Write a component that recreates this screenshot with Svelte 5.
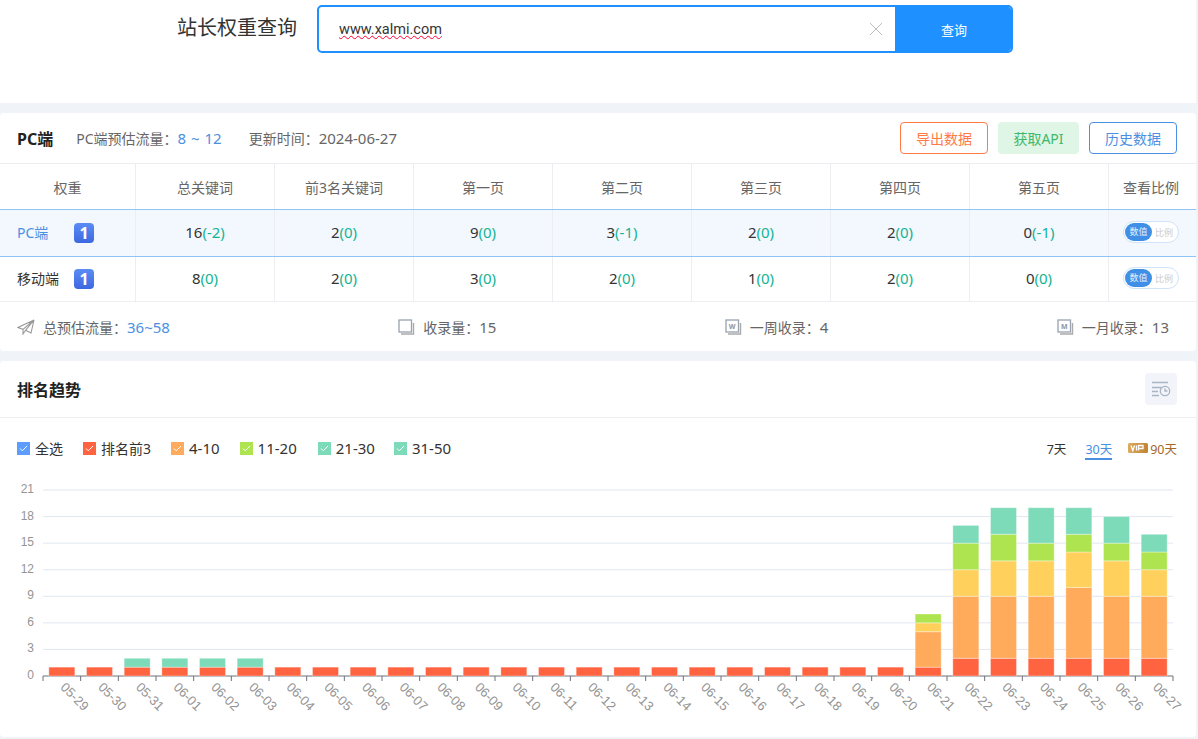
<script>
  const columns = ['权重', '总关键词', '前3名关键词', '第一页', '第二页', '第三页', '第四页', '第五页', '查看比例'];
  const rows = [
    { name: 'PC端', active: true, cells: [['16', '(-2)'], ['2', '(0)'], ['9', '(0)'], ['3', '(-1)'], ['2', '(0)'], ['2', '(0)'], ['0', '(-1)']] },
    { name: '移动端', active: false, cells: [['8', '(0)'], ['2', '(0)'], ['3', '(0)'], ['2', '(0)'], ['1', '(0)'], ['2', '(0)'], ['0', '(0)']] }
  ];
  const legend = [
    { label: '全选', color: '#5c9dff', gap: 20 },
    { label: '排名前3', color: '#ff6340', gap: 20 },
    { label: '4-10', color: '#ffab5b', gap: 20, num: true },
    { label: '11-20', color: '#aee44f', gap: 21, num: true },
    { label: '21-30', color: '#7ddbb9', gap: 19, num: true },
    { label: '31-50', color: '#7ddbb9', gap: 0, num: true }
  ];

  const colors = ['#ff6340', '#ffab5b', '#ffd15c', '#aee44f', '#7ddbb9'];
  const dates = ['05-29', '05-30', '05-31'];
  for (let d = 1; d <= 27; d++) dates.push('06-' + String(d).padStart(2, '0'));

  const special = {
    '05-31': [1, 0, 0, 0, 1],
    '06-01': [1, 0, 0, 0, 1],
    '06-02': [1, 0, 0, 0, 1],
    '06-03': [1, 0, 0, 0, 1],
    '06-21': [1, 4, 1, 1, 0],
    '06-22': [2, 7, 3, 3, 2],
    '06-23': [2, 7, 4, 3, 3],
    '06-24': [2, 7, 4, 2, 4],
    '06-25': [2, 8, 4, 2, 3],
    '06-26': [2, 7, 4, 2, 3],
    '06-27': [2, 7, 3, 2, 2]
  };

  const left = 43;
  const right = 1173;
  const top = 13;
  const base = 199;
  const step = (right - left) / dates.length;
  const unit = (base - top) / 21;
  const ticks = [0, 3, 6, 9, 12, 15, 18, 21];

  const bars = dates.map((date, i) => {
    const values = special[date] || [1, 0, 0, 0, 0];
    let sum = 0;
    const parts = [];
    values.forEach((v, s) => {
      if (v > 0) {
        parts.push({ y: base - (sum + v) * unit, h: v * unit, color: colors[s] });
        sum += v;
      }
    });
    return { date, x: left + step * i + (step - 26) / 2, center: left + step * (i + 0.5), parts };
  });
</script>

<div class="page">
  <section class="search">
    <h1>站长权重查询</h1>
    <div class="search-box">
      <div class="input">
        <span class="url">www.xalmi.com</span>
        <svg class="clear" width="14" height="14" viewBox="0 0 14 14"><path d="M1 1l12 12M13 1L1 13" stroke="#bdbdbd" stroke-width="1" fill="none" /></svg>
      </div>
      <button class="go">查询</button>
    </div>
  </section>

  <section class="card pc">
    <div class="pc-head">
      <strong>PC端</strong>
      <span class="meta first">PC端预估流量：<em class="num wide">8 ~ 12</em></span>
      <span class="meta">更新时间：<span class="num">2024-06-27</span></span>
      <div class="actions">
        <button class="btn orange">导出数据</button>
        <button class="btn green">获取API</button>
        <button class="btn blue">历史数据</button>
      </div>
    </div>

    <div class="table">
      <div class="tr th">
        {#each columns as c}
          <div class="td">{c}</div>
        {/each}
      </div>
      {#each rows as r}
        <div class="tr" class:active={r.active}>
          <div class="td name">
            <span class="rname">{r.name}</span>
            <span class="badge">1</span>
          </div>
          {#each r.cells as cell}
            <div class="td val">{cell[0]}<span class="diff">{cell[1]}</span></div>
          {/each}
          <div class="td val">
            <div class="toggle"><span class="on">数值</span><span class="off">比例</span></div>
          </div>
        </div>
      {/each}
    </div>

    <div class="stats">
      <div class="stat">
        <svg width="18" height="16" viewBox="0 0 18 16" fill="none" stroke="#999" stroke-width="1.1"><path d="M17 1L1 8.5l5 1.8L17 1zM17 1l-3 13-5.500-2.700L17 1zM6 10.300V15l2.500-3.700" /></svg>
        <span>总预估流量：<em class="num">36~58</em></span>
      </div>
      <div class="stat">
        <svg width="17" height="16" viewBox="0 0 17 16" fill="none"><path d="M3 15h12.500V4" stroke="#aaa" stroke-width="1.400" /><rect x="1" y="1" width="12.500" height="12" stroke="#98a2b0" stroke-width="1.300" /></svg>
        <span>收录量：<span class="num">15</span></span>
      </div>
      <div class="stat">
        <svg width="17" height="16" viewBox="0 0 17 16" fill="none"><path d="M3 15h12.500V4" stroke="#aaa" stroke-width="1.400" /><rect x="1" y="1" width="12.500" height="12" stroke="#98a2b0" stroke-width="1.300" /><text x="7.200" y="9.500" font-size="7" font-weight="700" text-anchor="middle" fill="#8b95a3" stroke="none">W</text></svg>
        <span>一周收录：<span class="num">4</span></span>
      </div>
      <div class="stat">
        <svg width="17" height="16" viewBox="0 0 17 16" fill="none"><path d="M3 15h12.500V4" stroke="#aaa" stroke-width="1.400" /><rect x="1" y="1" width="12.500" height="12" stroke="#98a2b0" stroke-width="1.300" /><text x="7.200" y="9.500" font-size="7" font-weight="700" text-anchor="middle" fill="#8b95a3" stroke="none">M</text></svg>
        <span>一月收录：<span class="num">13</span></span>
      </div>
    </div>
  </section>

  <section class="card trend">
    <div class="trend-head">
      <h2>排名趋势</h2>
      <button class="history" aria-label="历史">
        <svg width="20" height="16" viewBox="0 0 20 16" fill="none" stroke="#a9b4c4" stroke-width="1.300"><path d="M1 1.500h16M1 6.500h9M1 10.500h6M1 14.500h7" /><circle cx="14" cy="10" r="4.700" /><path d="M14 7.500V10h2.400" /></svg>
      </button>
    </div>

    <div class="filters">
      <div class="legend">
        {#each legend as l}
          <div class="leg" style:margin-right="{l.gap}px">
            <span class="check" style:background={l.color}>
              <svg width="9" height="7" viewBox="0 0 9 7" fill="none"><path d="M1 3.500l2.300 2.300L8 1" stroke="#fff" stroke-width="1" /></svg>
            </span>
            <span class:num={l.num}>{l.label}</span>
          </div>
        {/each}
      </div>
      <div class="ranges">
        <span class="seven">7天</span>
        <span class="cur">30天</span>
        <span class="vip">
          <svg width="20" height="10" viewBox="0 0 20 10"><defs><linearGradient id="vipg" x1="0" y1="0" x2="1" y2="0"><stop offset="0" stop-color="#dcaa5f" /><stop offset="1" stop-color="#bf8434" /></linearGradient></defs><rect width="20" height="10" rx="1.500" fill="url(#vipg)" /><path d="M3 2.500l1.800 5 1.800-5M8.500 2.500v5M10.500 7.500v-5h4.500v3h-4.500" stroke="#fff" stroke-width="1.300" fill="none" /></svg>
          90天
        </span>
      </div>
    </div>

    <svg class="chart" width="1196" height="250" viewBox="0 0 1196 250">
      {#each ticks as t}
        <line x1={left} x2={right} y1={base - t * unit} y2={base - t * unit} stroke={t === 0 ? '#6e7079' : '#e0e6f1'} stroke-width="1" />
        <text x="34" y={base - t * unit + 3} text-anchor="end" class="tick">{t}</text>
      {/each}
      {#each bars as b, i}
        {#each b.parts as p}
          <rect x={b.x} y={p.y} width="26" height={p.h} fill={p.color} stroke="#fff" stroke-opacity="0.35" stroke-width="1" />
        {/each}
        <line x1={left + step * i} x2={left + step * i} y1={base} y2={base + 5} stroke="#6e7079" />
        <text class="tick date" x={b.center - 2} y={base + 12} transform="rotate(45 {b.center - 2} {base + 12})">{b.date}</text>
      {/each}
      <line x1={right} x2={right} y1={base} y2={base + 5} stroke="#6e7079" />
    </svg>
  </section>
</div>

<style>
  :global(body) {
    background: #f0f4f8;
    font-family: "Noto Sans", "Noto Sans CJK SC", sans-serif;
    color: #333;
  }
  .page {
    width: 1196px;
    display: flex;
    flex-direction: column;
    gap: 10px;
    font-size: 14px;
  }
  em {
    font-style: normal;
    color: #4a90e2;
  }
  .num {
    font-size: 15px;
  }
  .wide {
    word-spacing: 1px;
  }
  button {
    font-family: inherit;
    cursor: pointer;
  }
  .search {
    height: 103px;
    background: #fff;
    display: flex;
    align-items: flex-start;
    padding: 5px 0 0 177px;
    box-sizing: border-box;
  }
  h1 {
    margin: 0 21px 0 0;
    font-size: 20px;
    font-weight: 400;
    line-height: 46px;
    color: #333;
  }
  .search-box {
    width: 696px;
    height: 48px;
    margin-left: -1px;
    flex: none;
    display: flex;
    border: 2px solid #1e90ff;
    border-radius: 5px;
    box-sizing: border-box;
    overflow: hidden;
  }
  .input {
    flex: 1;
    display: flex;
    align-items: center;
    justify-content: space-between;
    padding: 0 12px 0 20px;
  }
  .url {
    font-family: Roboto, sans-serif;
    font-size: 14.5px;
    color: #333;
    text-decoration: underline wavy #f03;
    text-decoration-thickness: 1px;
  }
  .go {
    width: 116px;
    border: 0;
    padding: 0 0 0 2px;
    background: #1e90ff;
    color: #fff;
    font-size: 13px;
  }
  .card {
    background: #fff;
    border-radius: 4px;
  }
  .pc-head {
    height: 50px;
    display: flex;
    align-items: center;
    padding: 0 19px 0 17px;
  }
  .pc-head strong {
    font-size: 16px;
    color: #222;
  }
  .meta {
    color: #666;
    margin-left: 27px;
  }
  .meta.first {
    margin-left: 23px;
  }
  .actions {
    margin-left: auto;
    display: flex;
    gap: 10px;
  }
  .btn {
    height: 32px;
    width: 88px;
    padding: 0;
    font-size: 14px;
    border-radius: 4px;
    background: #fff;
  }
  .orange {
    border: 1px solid #ff7a45;
    color: #ff7a45;
  }
  .green {
    width: 81px;
    border: 0;
    background: #dff5e6;
    color: #3cb96c;
  }
  .blue {
    border: 1px solid #4a90e2;
    color: #4a90e2;
  }
  .tr {
    display: grid;
    grid-template-columns: 136px repeat(7, 139px) 87px;
    height: 45px;
    border-bottom: 1px solid #eceef1;
    box-sizing: border-box;
  }
  .th {
    height: 46px;
    border-top: 1px solid #eceef1;
    color: #666;
    border-bottom: 0;
  }
  .tr.active {
    height: 48px;
    background: #f3f8ff;
    border-top: 1px solid #90c4f5;
    border-bottom: 1px solid #90c4f5;
  }
  .td {
    display: flex;
    align-items: center;
    justify-content: center;
    border-right: 1px solid #eceef1;
    font-size: 14px;
  }
  .val {
    font-size: 15px;
    padding-bottom: 2px;
  }
  .td:last-child {
    border-right: 0;
    padding-right: 3px;
  }
  .name {
    justify-content: flex-start;
    padding-left: 17px;
    padding-bottom: 2px;
    position: relative;
  }
  .active .rname {
    color: #4a90e2;
  }
  .badge {
    position: absolute;
    left: 74px;
    top: 50%;
    margin-top: -10px;
    width: 20px;
    height: 20px;
    border-radius: 4px;
    background: linear-gradient(180deg, #5b8cf5, #3c68e0);
    color: #fff;
    font-weight: 700;
    font-size: 16px;
    line-height: 20px;
    text-align: center;
  }
  .diff {
    color: #13b494;
  }
  .toggle {
    width: 56px;
    height: 22px;
    border: 1px solid #cfe3fa;
    border-radius: 11px;
    box-sizing: border-box;
    display: flex;
    align-items: center;
    padding-left: 1px;
    font-size: 9px;
    background: #fff;
  }
  .on {
    width: 27px;
    height: 18px;
    line-height: 18px;
    text-align: center;
    border-radius: 9px;
    background: #3f8fe6;
    color: #e4f0fc;
  }
  .off {
    margin-left: 3px;
    color: #ccc;
  }
  .stats {
    height: 49px;
    display: flex;
    justify-content: space-between;
    align-items: center;
    padding: 0 27px 0 17px;
    color: #666;
  }
  .stat {
    display: flex;
    align-items: center;
    gap: 8px;
  }
  .trend {
    height: 376px;
  }
  .trend-head {
    height: 57px;
    border-bottom: 1px solid #eceef1;
    box-sizing: border-box;
    display: flex;
    align-items: center;
    justify-content: space-between;
    padding: 0 19px 0 17px;
  }
  h2 {
    margin: 0;
    font-size: 16px;
    font-weight: 700;
    color: #222;
  }
  .history {
    width: 32px;
    height: 32px;
    border: 0;
    border-radius: 4px;
    background: #f2f4f9;
    padding: 0;
    display: flex;
    align-items: center;
    justify-content: center;
  }
  .filters {
    height: 59px;
    box-sizing: border-box;
    padding: 1px 19px 0 17px;
    display: flex;
    align-items: center;
    justify-content: space-between;
  }
  .legend {
    display: flex;
    color: #333;
  }
  .leg {
    display: flex;
    align-items: center;
    gap: 5px;
  }
  .check {
    width: 13px;
    height: 13px;
    display: flex;
    align-items: center;
    justify-content: center;
  }
  .ranges {
    display: flex;
    font-size: 12.5px;
    color: #333;
    align-items: center;
  }
  .seven {
    margin-right: 19px;
  }
  .cur {
    color: #4a90e2;
    border-bottom: 2px solid #4a90e2;
    margin: 0 16px -2px 0;
  }
  .vip {
    display: flex;
    align-items: center;
    gap: 2px;
    color: #a5672a;
  }
  .chart {
    display: block;
  }
  .tick {
    font-family: "Liberation Sans", sans-serif;
    font-size: 12px;
    fill: #949494;
  }
  .date {
    font-size: 13px;
  }
</style>
